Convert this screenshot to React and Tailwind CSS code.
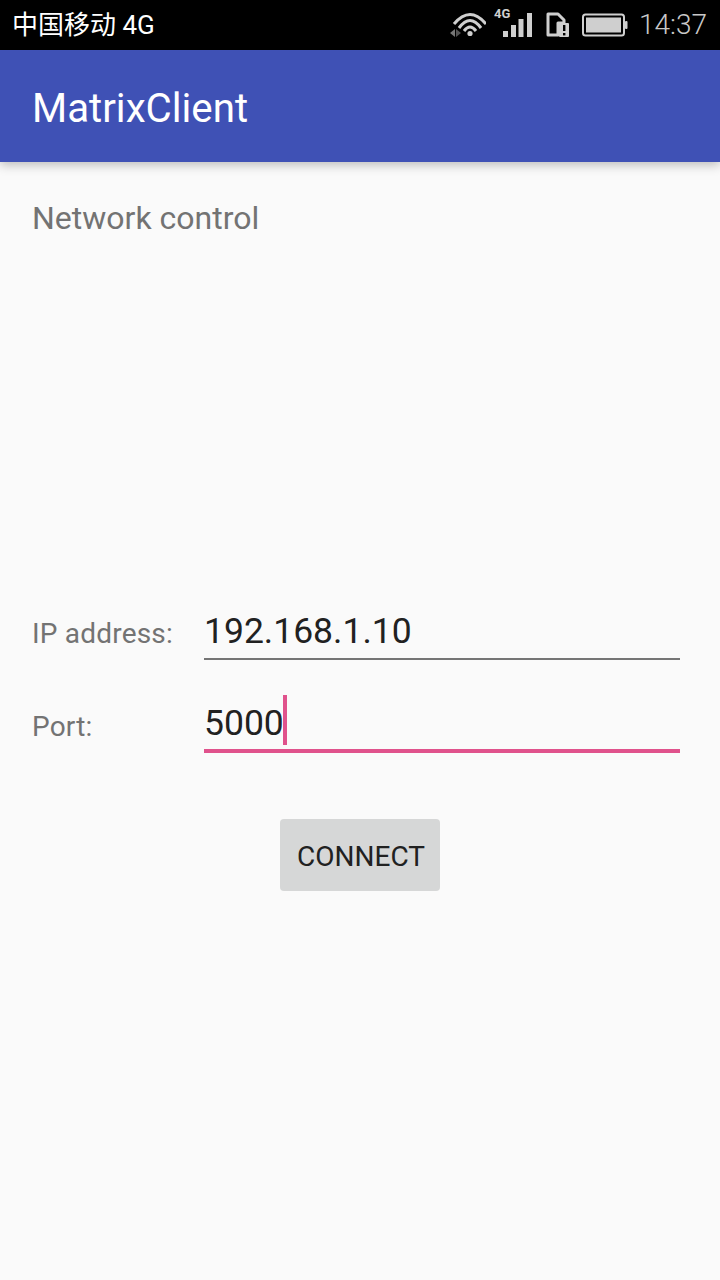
export default function App() {
  const roboto = "font-['Roboto',sans-serif]";
  return (
    <div className={`w-[720px] h-[1280px] bg-[#fafafa] flex flex-col overflow-hidden ${roboto}`}>
      <div className="h-[50px] bg-black flex items-center justify-between pl-[12px] pr-[13px] shrink-0">
        <span className="text-white text-[26px] leading-none font-['Roboto','Noto_Sans_CJK_SC',sans-serif]">中国移动 4G</span>
        <div className="flex items-center text-[#cfcfcf]">
          <svg width="36" height="28" viewBox="0 0 36 28" className="mr-[6px]">
            <path d="M4 13 Q20 -6 36 13" fill="none" stroke="#cfcfcf" strokeWidth="3" />
            <path d="M9 17 Q20 2 31 17" fill="none" stroke="#cfcfcf" strokeWidth="3" />
            <path d="M14 20 Q20 12 26 20" fill="none" stroke="#cfcfcf" strokeWidth="3" />
            <circle cx="20" cy="22.5" r="2.6" fill="#cfcfcf" />
            <path d="M0 22 L5 18 V26 Z" fill="#777" />
            <path d="M11 22 L6 18 V26 Z" fill="#555" />
          </svg>
          <div className="relative w-[40px] h-[28px]">
            <span className="absolute left-[2px] top-[-4px] text-[13px] leading-none font-bold text-[#cfcfcf]">4G</span>
            <svg width="40" height="28" viewBox="0 0 40 28" className="absolute left-0 top-0">
              <rect x="11" y="20" width="5" height="6" fill="#cfcfcf" />
              <rect x="19" y="14" width="5" height="12" fill="#cfcfcf" />
              <rect x="26.5" y="8" width="5" height="18" fill="#cfcfcf" />
              <rect x="35" y="2" width="5" height="24" fill="#cfcfcf" />
            </svg>
          </div>
          <svg width="24" height="26" viewBox="0 0 24 26" className="ml-[14px]">
            <path d="M2 2 H12 L18 8 V11 H12 V23 H2 Z" fill="none" stroke="#cfcfcf" strokeWidth="3" strokeLinejoin="round" />
            <rect x="13" y="11" width="10" height="14" rx="1" fill="#cfcfcf" />
            <rect x="17" y="13" width="2.4" height="6" fill="#000" />
            <rect x="17" y="21" width="2.4" height="2.4" fill="#000" />
          </svg>
          <svg width="46" height="24" viewBox="0 0 46 24" className="ml-[12px]">
            <rect x="1" y="1.5" width="41" height="21" rx="2.5" fill="none" stroke="#cfcfcf" strokeWidth="2" />
            <rect x="4" y="4.5" width="35" height="15" fill="#cfcfcf" />
            <rect x="43" y="8" width="2.5" height="8" rx="1" fill="#cfcfcf" />
          </svg>
          <span className="ml-[11px] text-[28px] leading-none text-[#c8c8c8] font-light">14:37</span>
        </div>
      </div>
      <div className="h-[112px] bg-[#3f51b5] flex items-center pl-[32px] pt-[6px] shadow-[0_3px_10px_rgba(0,0,0,0.25)] shrink-0 z-10">
        <span className="text-white text-[40.25px] leading-none font-normal">MatrixClient</span>
      </div>
      <div className="flex-1 pl-[32px] pr-[33px] pt-[38px] flex flex-col">
        <div className="text-[32px] leading-[36px] text-[#737373]">Network control</div>
        <div className="mt-[364px] flex items-end pr-[7px]">
          <div className="w-[172px] text-[28px] leading-[32px] tracking-[0.2px] text-[#737373] pb-[10px]">IP address:</div>
          <div className="flex-1 border-b-2 border-[#757575] h-[60px] flex items-center text-[35.5px] text-[#212121] pt-[6px]">192.168.1.10</div>
        </div>
        <div className="mt-[33px] flex items-end pr-[7px]">
          <div className="w-[172px] text-[28px] leading-[32px] tracking-[0.2px] text-[#737373] pb-[10px]">Port:</div>
          <div className="flex-1 border-b-4 border-[#e0528c] h-[60px] flex items-center text-[35.5px] text-[#212121] pb-[2px]">
            <span className="pt-[8px]">5000</span><span className="w-[4px] h-[50px] bg-[#e0528c] -ml-px"></span>
          </div>
        </div>
        <div className="mt-[66px] flex justify-center pl-[1px]">
          <button className="w-[160px] h-[72px] bg-[#d6d7d7] rounded-[4px] text-[28px] text-[#212121] pt-[3px] pl-[2px]">CONNECT</button>
        </div>
      </div>
    </div>
  );
}
